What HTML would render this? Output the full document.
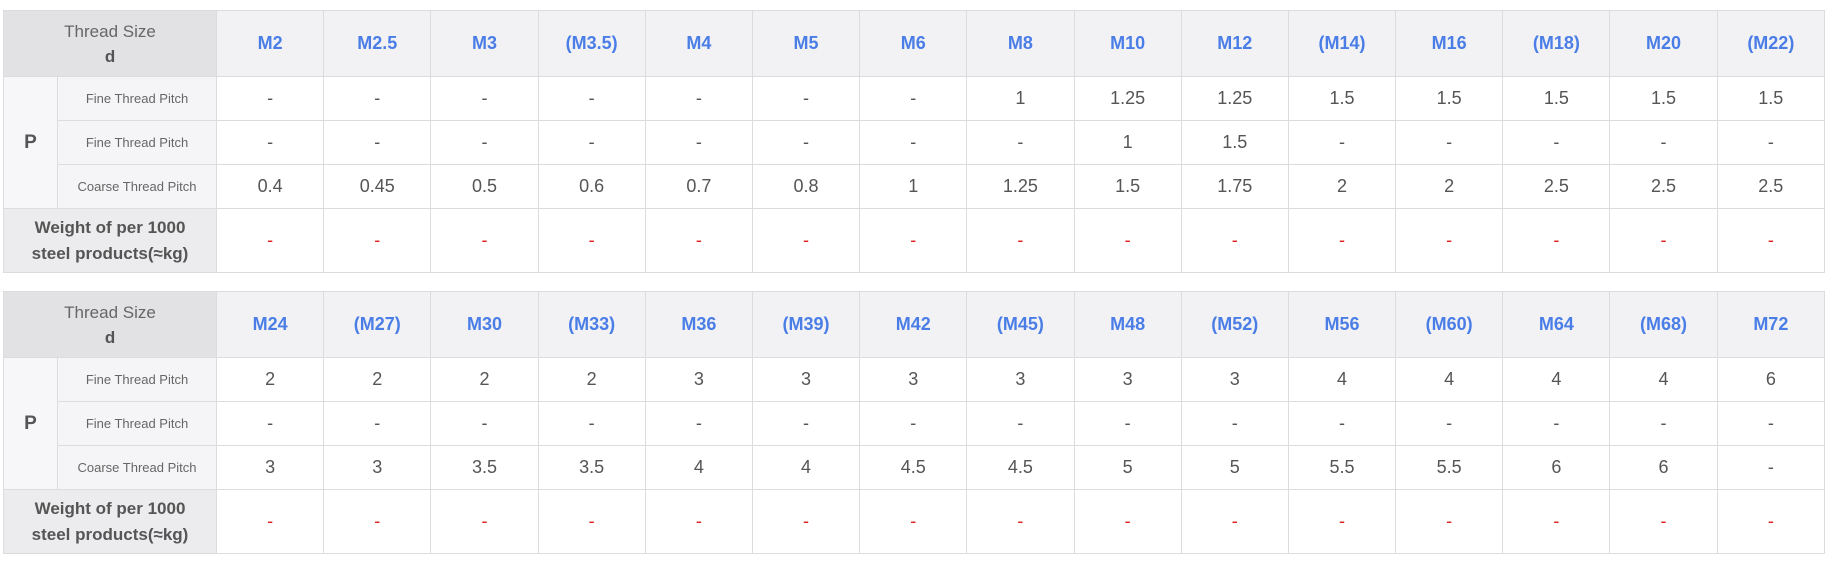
<!DOCTYPE html>
<html><head><style>
body{margin:0;background:#fff;font-family:"Liberation Sans","Noto Sans CJK SC",sans-serif;}
table{position:absolute;left:3px;border-collapse:collapse;table-layout:fixed;width:1822px;}
td{border:1px solid #dcdcdf;text-align:center;color:#555;font-size:18px;padding:0;}
.h td{background:#f2f2f5;color:#4a7ee6;font-weight:bold;font-size:18px;height:65px;}
.h td.ts{background:#e2e2e4;color:#666;font-weight:normal;font-size:17px;line-height:25px;}
.h td.ts b{color:#555;}
.lab{background:#f5f5f7;font-size:13px;color:#666;}
.p{background:#f7f7f9;font-size:19px;font-weight:bold;}
.r td{height:43px;}
.w td{height:63px;}
.w td.wl{background:#ececee;font-weight:bold;font-size:17px;line-height:26px;color:#555;}
.red{color:#e02020;}
</style></head><body>
<table style="top:10px">
<colgroup><col style="width:54px"><col style="width:159px"><col span="15" style="width:107.2px"></colgroup>
<tr class="h"><td class="ts" colspan="2">Thread Size<br><b>d</b></td><td>M2</td><td>M2.5</td><td>M3</td><td>(M3.5)</td><td>M4</td><td>M5</td><td>M6</td><td>M8</td><td>M10</td><td>M12</td><td>(M14)</td><td>M16</td><td>(M18)</td><td>M20</td><td>(M22)</td></tr>
<tr class="r"><td class="p" rowspan="3">P</td><td class="lab">Fine Thread Pitch</td><td>-</td><td>-</td><td>-</td><td>-</td><td>-</td><td>-</td><td>-</td><td>1</td><td>1.25</td><td>1.25</td><td>1.5</td><td>1.5</td><td>1.5</td><td>1.5</td><td>1.5</td></tr>
<tr class="r"><td class="lab">Fine Thread Pitch</td><td>-</td><td>-</td><td>-</td><td>-</td><td>-</td><td>-</td><td>-</td><td>-</td><td>1</td><td>1.5</td><td>-</td><td>-</td><td>-</td><td>-</td><td>-</td></tr>
<tr class="r"><td class="lab">Coarse Thread Pitch</td><td>0.4</td><td>0.45</td><td>0.5</td><td>0.6</td><td>0.7</td><td>0.8</td><td>1</td><td>1.25</td><td>1.5</td><td>1.75</td><td>2</td><td>2</td><td>2.5</td><td>2.5</td><td>2.5</td></tr>
<tr class="w"><td class="wl" colspan="2">Weight of per 1000<br>steel products(≈kg)</td><td class="red">-</td><td class="red">-</td><td class="red">-</td><td class="red">-</td><td class="red">-</td><td class="red">-</td><td class="red">-</td><td class="red">-</td><td class="red">-</td><td class="red">-</td><td class="red">-</td><td class="red">-</td><td class="red">-</td><td class="red">-</td><td class="red">-</td></tr>
</table>
<table style="top:291px">
<colgroup><col style="width:54px"><col style="width:159px"><col span="15" style="width:107.2px"></colgroup>
<tr class="h"><td class="ts" colspan="2">Thread Size<br><b>d</b></td><td>M24</td><td>(M27)</td><td>M30</td><td>(M33)</td><td>M36</td><td>(M39)</td><td>M42</td><td>(M45)</td><td>M48</td><td>(M52)</td><td>M56</td><td>(M60)</td><td>M64</td><td>(M68)</td><td>M72</td></tr>
<tr class="r"><td class="p" rowspan="3">P</td><td class="lab">Fine Thread Pitch</td><td>2</td><td>2</td><td>2</td><td>2</td><td>3</td><td>3</td><td>3</td><td>3</td><td>3</td><td>3</td><td>4</td><td>4</td><td>4</td><td>4</td><td>6</td></tr>
<tr class="r"><td class="lab">Fine Thread Pitch</td><td>-</td><td>-</td><td>-</td><td>-</td><td>-</td><td>-</td><td>-</td><td>-</td><td>-</td><td>-</td><td>-</td><td>-</td><td>-</td><td>-</td><td>-</td></tr>
<tr class="r"><td class="lab">Coarse Thread Pitch</td><td>3</td><td>3</td><td>3.5</td><td>3.5</td><td>4</td><td>4</td><td>4.5</td><td>4.5</td><td>5</td><td>5</td><td>5.5</td><td>5.5</td><td>6</td><td>6</td><td>-</td></tr>
<tr class="w"><td class="wl" colspan="2">Weight of per 1000<br>steel products(≈kg)</td><td class="red">-</td><td class="red">-</td><td class="red">-</td><td class="red">-</td><td class="red">-</td><td class="red">-</td><td class="red">-</td><td class="red">-</td><td class="red">-</td><td class="red">-</td><td class="red">-</td><td class="red">-</td><td class="red">-</td><td class="red">-</td><td class="red">-</td></tr>
</table>
</body></html>
